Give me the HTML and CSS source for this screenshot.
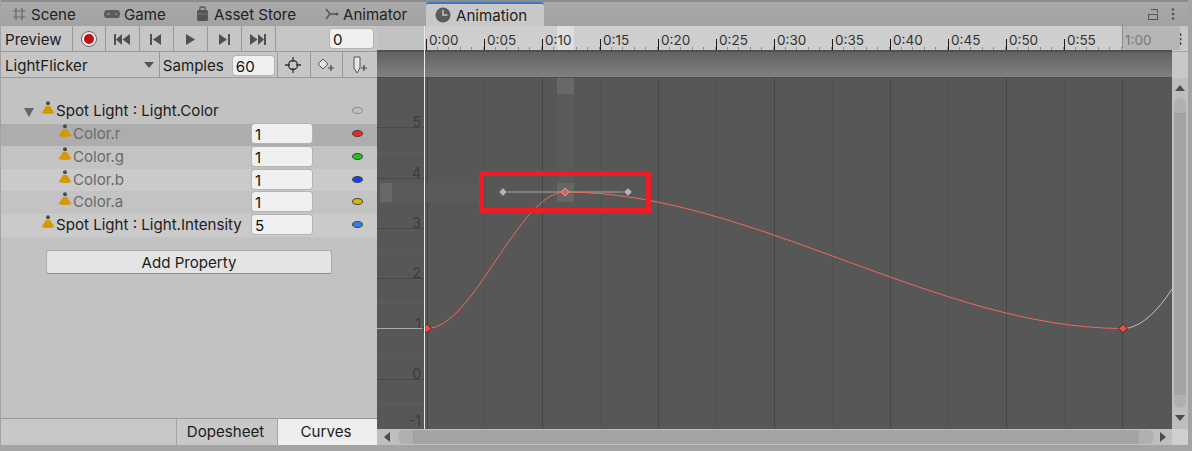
FILE: index.html
```html
<!DOCTYPE html>
<html lang="en">
<head>
    <meta charset="UTF-8">
    <title>Animation</title>
    <link rel="stylesheet" href="styles.css">
</head>
<body>

<svg class="defs" width="0" height="0">
    <symbol id="light" viewBox="0 0 14 14">
        <circle cx="7" cy="2.200" r="2" fill="#4a4a4a"/>
        <path d="M5 5 H9 L13.500 12 Q7 14 0.500 12 Z" fill="#d29a00"/>
    </symbol>
</svg>

<div class="window">
    <div class="tabs">
        <div class="tab tab-scene">
            <svg class="tab-icon" width="14" height="14" viewBox="0 0 14 14"><path d="M4 1V13M10 1V13M1 4H13M1 10H13" stroke="#666" stroke-width="1.200" fill="none"/></svg>
            Scene
        </div>
        <div class="tab tab-game">
            <svg class="tab-icon" width="18" height="12" viewBox="0 0 18 12"><path d="M4 2H14Q17 2 17 6Q17 10 14.500 10H3.500Q1 10 1 6Q1 2 4 2Z" fill="#5c5c5c"/><path d="M4 6H7M12 6H14" stroke="#a8a8a8" stroke-width="1.200"/></svg>
            Game
        </div>
        <div class="tab tab-store">
            <svg class="tab-icon" width="13" height="16" viewBox="0 0 13 16"><path d="M4 4V2Q4 1 5 1H8Q9 1 9 2V4" stroke="#555" stroke-width="1.300" fill="none"/><rect x="1" y="4" width="11" height="11" rx="1.500" fill="#555"/><path d="M1 8H12" stroke="#777"/></svg>
            Asset Store
        </div>
        <div class="tab tab-animator">
            <svg class="tab-icon" width="15" height="14" viewBox="0 0 15 14"><path d="M2 2L6 7L2 12M6 7H12" stroke="#555" stroke-width="1.500" fill="none"/><circle cx="13" cy="7" r="1.500" fill="#555"/></svg>
            Animator
        </div>
        <div class="tab tab-active">
            <svg class="tab-icon" width="16" height="16" viewBox="0 0 16 16"><circle cx="8" cy="8" r="7.500" fill="#5a5a5a"/><path d="M8 3V8H12.500" stroke="#c8c8c8" stroke-width="1.500" fill="none"/></svg>
            Animation
        </div>
        <div class="tab-tools">
            <svg width="12" height="13" viewBox="0 0 12 13"><path d="M3.500 1.500H10.500V5" stroke="#555" fill="none"/><rect x="1.500" y="6.500" width="9" height="5" stroke="#555" fill="none"/></svg>
            <svg width="4" height="14" viewBox="0 0 4 14"><circle cx="2" cy="2.500" r="1.300" fill="#555"/><circle cx="2" cy="7" r="1.300" fill="#555"/><circle cx="2" cy="11.500" r="1.300" fill="#555"/></svg>
        </div>
    </div>

    <div class="content">
        <div class="left">
            <div class="toolbar">
                <div class="tool tool-preview">Preview</div>
                <div class="tool tool-btn tool-rec">
                    <svg width="18" height="18" viewBox="0 0 18 18"><circle cx="9" cy="9" r="7.500" fill="#eee" stroke="#666"/><circle cx="9" cy="9" r="5" fill="#c30f0f"/></svg>
                </div>
                <div class="tool tool-btn"><svg width="18" height="11" viewBox="0 0 18 11"><path d="M1 0H3V11H1ZM9 0V11L3 5.500ZM17 0V11L9.500 5.500Z" fill="#505050"/></svg></div>
                <div class="tool tool-btn"><svg width="12" height="11" viewBox="0 0 12 11"><path d="M0 0H2V11H0ZM11 0V11L3 5.500Z" fill="#505050"/></svg></div>
                <div class="tool tool-btn"><svg width="9" height="11" viewBox="0 0 9 11"><path d="M0 0V11L9 5.500Z" fill="#505050"/></svg></div>
                <div class="tool tool-btn"><svg width="12" height="11" viewBox="0 0 12 11"><path d="M12 0H10V11H12ZM1 0V11L9 5.500Z" fill="#505050"/></svg></div>
                <div class="tool tool-btn"><svg width="18" height="11" viewBox="0 0 18 11"><path d="M17 0H15V11H17ZM9 0V11L15 5.500ZM1 0V11L8.500 5.500Z" fill="#505050"/></svg></div>
                <div class="tool tool-fill">
                    <div class="field field-frame">0</div>
                </div>
            </div>
            <div class="toolbar">
                <div class="tool tool-clip">
                    LightFlicker
                    <span class="caret"></span>
                </div>
                <div class="tool tool-samples">
                    Samples
                    <div class="field field-samples">60</div>
                </div>
                <div class="tool tool-btn tool-small">
                    <svg width="18" height="18" viewBox="0 0 18 18"><circle cx="9" cy="9" r="4.500" fill="none" stroke="#333" stroke-width="1.300"/><path d="M9 1V6M9 12V17M1 9H6M12 9H17" stroke="#333" stroke-width="1.300"/></svg>
                </div>
                <div class="tool tool-btn tool-small">
                    <svg width="20" height="16" viewBox="0 0 20 16"><path d="M7 2L12 7L7 12L2 7Z" fill="#e6e6e6" stroke="#555"/><path d="M15 8V14M12 11H18" stroke="#444" stroke-width="1.200"/></svg>
                </div>
                <div class="tool tool-btn tool-last">
                    <svg width="16" height="20" viewBox="0 0 16 20"><path d="M2 2H8V13L5 18L2 13Z" fill="#e6e6e6" stroke="#555"/><path d="M12 10V16M9 13H15" stroke="#444" stroke-width="1.200"/></svg>
                </div>
            </div>

            <div class="props">
                <div class="row row-head">
                    <span class="arrow"></span>
                    <svg class="light"><use href="#light"/></svg>
                    <span class="prop-name">Spot Light : Light.Color</span>
                    <span class="dot dot-empty"></span>
                </div>
                <div class="row row-sel row-child">
                    <svg class="light"><use href="#light"/></svg>
                    <span class="prop-name prop-dim">Color.r</span>
                    <div class="field field-value">1</div>
                    <span class="dot dot-red"></span>
                </div>
                <div class="row row-a row-child">
                    <svg class="light"><use href="#light"/></svg>
                    <span class="prop-name prop-dim">Color.g</span>
                    <div class="field field-value">1</div>
                    <span class="dot dot-green"></span>
                </div>
                <div class="row row-b row-child">
                    <svg class="light"><use href="#light"/></svg>
                    <span class="prop-name prop-dim">Color.b</span>
                    <div class="field field-value">1</div>
                    <span class="dot dot-blue"></span>
                </div>
                <div class="row row-a row-child">
                    <svg class="light"><use href="#light"/></svg>
                    <span class="prop-name prop-dim">Color.a</span>
                    <div class="field field-value">1</div>
                    <span class="dot dot-yellow"></span>
                </div>
                <div class="row row-b row-top">
                    <svg class="light"><use href="#light"/></svg>
                    <span class="prop-name">Spot Light : Light.Intensity</span>
                    <div class="field field-value">5</div>
                    <span class="dot dot-sky"></span>
                </div>
                <div class="add-wrap">
                    <div class="add-btn">Add Property</div>
                </div>
            </div>

            <div class="mode-tabs">
                <div class="mode-tab">Dopesheet</div>
                <div class="mode-tab mode-active">Curves</div>
            </div>
        </div>

        <div class="right">
            <div class="main">
                <div class="ruler">
                    <div class="ruler-gutter"></div>
                    <div class="ruler-scale">
                        <div class="mark">0:00</div>
                        <div class="mark">0:05</div>
                        <div class="mark">0:10</div>
                        <div class="mark">0:15</div>
                        <div class="mark">0:20</div>
                        <div class="mark">0:25</div>
                        <div class="mark">0:30</div>
                        <div class="mark">0:35</div>
                        <div class="mark">0:40</div>
                        <div class="mark">0:45</div>
                        <div class="mark">0:50</div>
                        <div class="mark">0:55</div>
                    </div>
                    <div class="ruler-end"><div class="mark mark-end">1:00</div></div>
                    <div class="ruler-key"></div>
                </div>
                <div class="events"></div>
                <div class="curve">
                    <svg class="curve-svg" width="795" height="352" viewBox="377 77 795 352">
                        <!-- faint half lines, left of the playhead only -->
                        <path d="M377 152H424M377 202H424M377 252H424M377 302H424M377 353H424M377 403H424" stroke="#5e5e5e"/>
                        <!-- value lines -->
                        <path d="M377 126.500H424M377 177.500H424M377 227.500H424M377 277.500H424M377 378.500H424M377 428.500H424" stroke="#484848"/>
                        <path d="M484.500 77V429M600.500 77V429M716.500 77V429M832.500 77V429M948.500 77V429M1064.500 77V429" stroke="#525252"/>
                        <path d="M427.500 77V429M542.500 77V429M658.500 77V429M774.500 77V429M890.500 77V429M1006.500 77V429M1122.500 77V429" stroke="#464646"/>
                        <!-- key highlight -->
                        <rect x="557" y="77" width="17" height="16" fill="#686868"/>
                        <rect x="557" y="93" width="17" height="89" fill="#5a5a5a"/>
                        <rect x="557" y="182" width="17" height="19" fill="#666"/>
                        <rect x="380" y="182" width="12" height="19" fill="#686868"/>
                        <rect x="392" y="182" width="88" height="19" fill="#5a5a5a"/>
                        <g class="axis">
                            <text x="421" y="126">5</text>
                            <text x="421" y="177">4</text>
                            <text x="421" y="227">3</text>
                            <text x="421" y="277">2</text>
                            <text x="421" y="328">1</text>
                            <text x="421" y="378">0</text>
                            <text x="421" y="425">-1</text>
                        </g>
                        <!-- curve -->
                        <path d="M377 327.500H427" stroke="#a8a8a8" fill="none"/>
                        <path d="M1123 327.500C1140 327.500 1158 310 1172 288" stroke="#c4c4c4" fill="none"/>
                        <path d="M503 191H628" stroke="#a8a8a8" fill="none"/>
                        <path d="M427 327.500C473 327.500 519 191 565 191C751 191 937 327.500 1123 327.500" stroke="#f2695a" fill="none"/>
                        <path d="M503 186.500L507.500 191L503 195.500L498.500 191Z" fill="#b4b4b4" stroke="#484848"/>
                        <path d="M628 186.500L632.500 191L628 195.500L623.500 191Z" fill="#b4b4b4" stroke="#484848"/>
                        <path d="M565 187L569 191L565 195L561 191Z" fill="#e8604f" stroke="#bdbdbd" stroke-width="0.800"/>
                        <path d="M427 323L431.500 327.500L427 332L422.500 327.500Z" fill="#ee4a3c" stroke="#333"/>
                        <path d="M1123 323L1127.500 327.500L1123 332L1118.500 327.500Z" fill="#ee4a3c" stroke="#333"/>
                    </svg>
                    <div class="callout"></div>
                </div>
                <div class="hscroll">
                    <span class="arrow-left"></span>
                    <div class="hthumb"></div>
                    <span class="arrow-right"></span>
                </div>
                <div class="playhead"></div>
            </div>
            <div class="side">
                <div class="side-menu">
                    <svg width="4" height="14" viewBox="0 0 4 14"><circle cx="2" cy="2.500" r="1.500" fill="#444"/><circle cx="2" cy="7" r="1.500" fill="#444"/><circle cx="2" cy="11.500" r="1.500" fill="#444"/></svg>
                </div>
                <div class="side-blank"></div>
                <div class="vscroll">
                    <span class="arrow-up"></span>
                    <div class="vthumb"></div>
                    <span class="arrow-down"></span>
                </div>
                <div class="side-corner"></div>
            </div>
        </div>
    </div>
</div>

</body>
</html>
```

FILE: styles.css
```css
* {
    box-sizing: border-box;
}
body {
    margin: 0;
    background-color: #a3a3a3;
    font-family: Inter, "Liberation Sans", sans-serif;
    font-size: 15.1px;
    color: #1c1c1c;
    overflow: hidden;
}
.defs {
    display: none;
}
.window {
    width: 1187px;
    height: 445px;
    margin-left: 1px;
    display: flex;
    flex-direction: column;
    background-color: #c2c2c2;
}
.tabs {
    height: 26px;
    flex: none;
    display: flex;
    align-items: center;
    padding-top: 2px;
    background: linear-gradient(#8c8c8c 0, #8c8c8c 2px, #a9a9a9 2px, #a2a2a2);
    color: #222;
    position: relative;
}
.tab {
    display: flex;
    align-items: center;
    height: 24px;
    white-space: nowrap;
}
.tab-scene {
    width: 101px;
    padding-left: 11px;
    gap: 5px;
}
.tab-game {
    width: 91px;
    padding-left: 1px;
    gap: 3px;
}
.tab-store {
    width: 130px;
    padding-left: 3px;
    gap: 5px;
}
.tab-animator {
    width: 103px;
    gap: 4px;
    padding-left: 1px;
}
.tab-active {
    width: 118px;
    padding-left: 9px;
    gap: 5px;
    background-color: #c8c8c8;
    border-top: 2px solid #3b78c4;
    border-radius: 3px 3px 0 0;
}
.tab-tools {
    margin-left: auto;
    display: flex;
    align-items: center;
    gap: 12px;
    padding-right: 13px;
}
.content {
    flex: 1;
    display: flex;
    min-height: 0;
}
.left {
    width: 376px;
    flex: none;
    display: flex;
    flex-direction: column;
}
.toolbar {
    height: 26px;
    flex: none;
    display: flex;
    background-color: #c6c6c6;
    border-bottom: 1px solid #999;
}
.tool {
    display: flex;
    align-items: center;
    border-right: 1px solid #999;
    height: 100%;
    padding-top: 1px;
}
.tool-preview {
    width: 72px;
    padding-left: 4px;
}
.tool-btn {
    width: 34px;
    justify-content: center;
    padding-right: 1px;
}
.tool-rec {
    width: 33px;
}
.tool-small {
    width: 33px;
}
.tool-fill {
    flex: 1;
    justify-content: flex-end;
    padding-right: 4px;
    padding-top: 0;
    border-right: none;
}
.tool-clip {
    width: 160px;
    padding-left: 4px;
    padding-right: 5px;
    justify-content: space-between;
}
.tool-samples {
    width: 119px;
    padding-left: 3px;
    gap: 9px;
}
.tool-last {
    border-right: none;
}
.caret {
    width: 0;
    height: 0;
    border-left: 5px solid transparent;
    border-right: 5px solid transparent;
    border-top: 6px solid #555;
}
.field {
    background-color: #f0f0f0;
    border-radius: 3px;
    box-shadow: 0 0 0 1px #b4b4b4;
    height: 19px;
    line-height: 21px;
    padding-left: 3px;
    color: #111;
}
.field-frame {
    width: 43px;
}
.field-samples {
    width: 41px;
}
.field-value {
    width: 60px;
    flex: none;
    margin-left: auto;
}
.props {
    flex: 1;
    padding-top: 23px;
}
.row {
    height: 22.6px;
    display: flex;
    align-items: center;
    padding-right: 14px;
    padding-bottom: 2px;
}
.row-head {
    padding-left: 23px;
    padding-bottom: 3px;
}
.row-child {
    padding-left: 57px;
}
.row-top {
    padding-left: 40px;
}
.row-sel {
    background-color: #adadad;
}
.row-a {
    background-color: #c3c3c3;
}
.row-b {
    background-color: #cacaca;
}
.arrow {
    width: 0;
    height: 0;
    border-left: 5.5px solid transparent;
    border-right: 5.5px solid transparent;
    border-top: 9px solid #666;
    margin-right: 7px;
    margin-top: 3px;
}
.light {
    width: 14px;
    height: 14px;
    flex: none;
    margin-right: 1px;
    margin-top: -5px;
}
.prop-name {
    white-space: nowrap;
}
.prop-dim {
    color: #6a6a6a;
}
.dot {
    width: 11px;
    height: 7px;
    border-radius: 50%;
    border: 1px solid #444;
    flex: none;
    margin-left: 40px;
}
.row-head .dot {
    margin-left: auto;
}
.dot-empty {
    background-color: transparent;
    border-color: #888;
}
.dot-red {
    background-color: #e8291c;
}
.dot-green {
    background-color: #1cc41c;
}
.dot-blue {
    background-color: #1f3bf0;
}
.dot-yellow {
    background-color: #e0b400;
}
.dot-sky {
    background-color: #2c82f0;
}
.add-wrap {
    padding: 13px 45px 0 45px;
}
.add-btn {
    height: 24px;
    line-height: 23px;
    text-align: center;
    background-color: #e4e4e4;
    border: 1px solid #aaa;
    border-bottom-color: #8c8c8c;
    border-radius: 3px;
}
.mode-tabs {
    height: 27px;
    flex: none;
    display: flex;
    justify-content: flex-end;
    background-color: #c8c8c8;
    border-top: 1px solid #999;
}
.mode-tab {
    width: 100px;
    text-align: center;
    line-height: 26px;
    border-left: 1px solid #a5a5a5;
    padding-right: 3px;
}
.mode-tabs .mode-tab:first-child {
    width: 101px;
}
.mode-active {
    background-color: #ededed;
}
.right {
    flex: 1;
    display: flex;
    min-width: 0;
}
.main {
    flex: 1;
    display: flex;
    flex-direction: column;
    min-width: 0;
    position: relative;
}
.ruler {
    height: 26px;
    flex: none;
    display: flex;
    position: relative;
    border-bottom: 2px solid #505050;
    font-size: 13.5px;
    color: #333;
}
.ruler-gutter {
    width: 49px;
    flex: none;
    background-color: #c2c2c2;
}
.ruler-scale {
    width: 696px;
    flex: none;
    display: flex;
    background-color: #cecece;
    background-image: repeating-linear-gradient(90deg, transparent 0, transparent 10.6px, #8e8e8e 10.6px, #8e8e8e 11.6px);
    background-size: 100% 3px;
    background-position: 0 bottom;
    background-repeat: no-repeat;
}
.ruler-end {
    flex: 1;
    background-color: #b6b6b6;
}
.mark {
    width: 58px;
    flex: none;
    padding-left: 3px;
    padding-top: 6px;
    line-height: 16px;
    position: relative;
    z-index: 1;
}
.mark::before {
    content: "";
    position: absolute;
    left: 0;
    bottom: 0;
    height: 11px;
    border-left: 1px solid #1a1a1a;
}
.mark-end {
    color: #7a7a7a;
}
.mark-end::before {
    height: 24px;
    border-left-color: #8c8c8c;
}
.ruler-key {
    position: absolute;
    left: 180px;
    top: 0;
    bottom: 0;
    width: 17px;
    background-color: #dedede;
}
.events {
    height: 26px;
    flex: none;
    background: linear-gradient(#626262, #808080);
    border-bottom: 1px solid #4e4e4e;
}
.curve {
    flex: 1;
    position: relative;
    background-color: #575757;
    overflow: hidden;
}
.curve-svg {
    display: block;
}
.axis text {
    font-size: 14px;
    fill: #3c3c3c;
    text-anchor: end;
}
.callout {
    position: absolute;
    left: 102px;
    top: 93px;
    width: 172px;
    height: 42px;
    border: 5px solid #ee1c25;
}
.hscroll {
    height: 16px;
    flex: none;
    display: flex;
    align-items: center;
    background-color: #bebebe;
    padding: 0 6px 0 7px;
}
.arrow-left {
    width: 0;
    height: 0;
    border-top: 5px solid transparent;
    border-bottom: 5px solid transparent;
    border-right: 6px solid #4c4c4c;
}
.arrow-right {
    width: 0;
    height: 0;
    border-top: 5px solid transparent;
    border-bottom: 5px solid transparent;
    border-left: 6px solid #4c4c4c;
}
.hthumb {
    flex: 1;
    height: 14px;
    margin: 0 6px 0 8px;
    background: linear-gradient(90deg, #b0b0b0 15px, #9a9a9a 15px, #a4a4a4 16px, #a4a4a4 calc(100% - 16px), #9a9a9a calc(100% - 16px), #b0b0b0 calc(100% - 15px));
    border-radius: 6px;
}
.playhead {
    position: absolute;
    left: 47px;
    top: 0;
    height: 403px;
    border-left: 1px solid #eaeaea;
}
.side {
    width: 16px;
    flex: none;
    display: flex;
    flex-direction: column;
}
.side-menu {
    height: 26px;
    flex: none;
    display: flex;
    align-items: center;
    justify-content: center;
    background-color: #c8c8c8;
    border-bottom: 1px solid #a5a5a5;
}
.side-blank {
    height: 26px;
    flex: none;
    background-color: #c8c8c8;
}
.vscroll {
    flex: 1;
    display: flex;
    flex-direction: column;
    align-items: center;
    padding: 7px 0 8px 0;
    background-color: #bebebe;
}
.arrow-up {
    width: 0;
    height: 0;
    border-left: 5px solid transparent;
    border-right: 5px solid transparent;
    border-bottom: 6px solid #4c4c4c;
}
.arrow-down {
    width: 0;
    height: 0;
    border-left: 5px solid transparent;
    border-right: 5px solid transparent;
    border-top: 6px solid #4c4c4c;
}
.vthumb {
    flex: 1;
    width: 12px;
    margin: 7px 0 7px 0;
    background: linear-gradient(#b0b0b0 15px, #9a9a9a 15px, #a4a4a4 16px, #a4a4a4 calc(100% - 14px), #9a9a9a calc(100% - 14px), #b0b0b0 calc(100% - 13px));
    border-radius: 6px;
}
.side-corner {
    height: 16px;
    flex: none;
    background-color: #cfcfcf;
}
```
